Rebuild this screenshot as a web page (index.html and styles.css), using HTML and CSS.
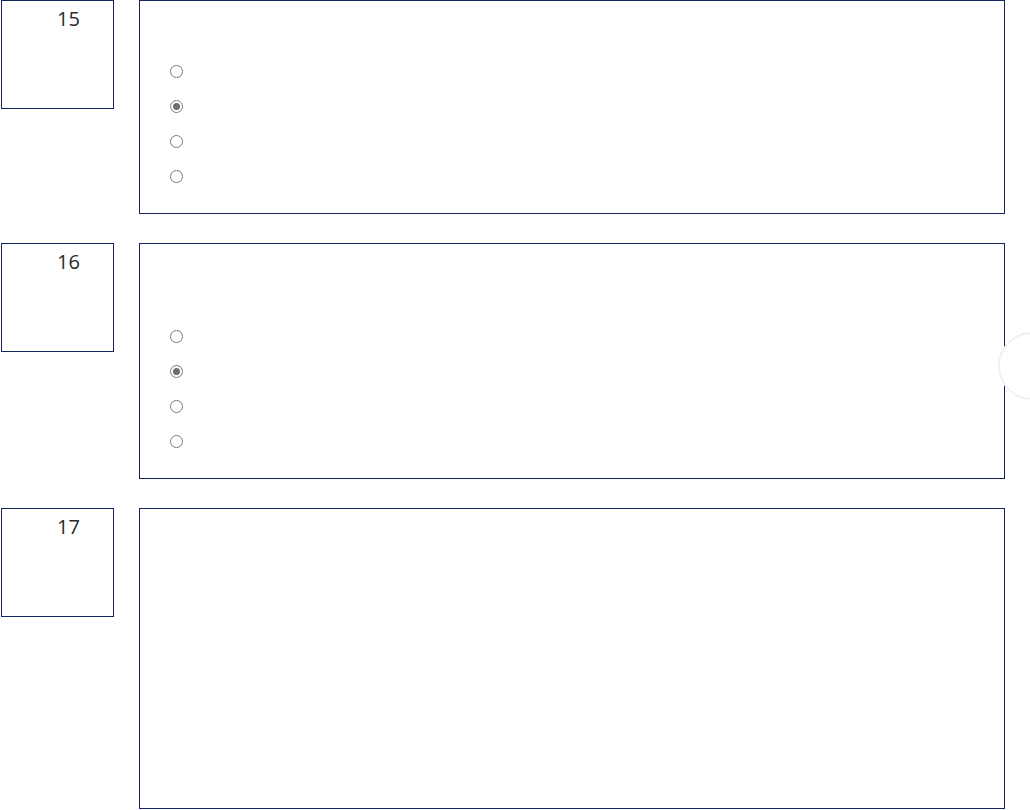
FILE: index.html
```html
<!DOCTYPE html>
<html lang="en">

<head>
  <meta charset="UTF-8" />
  <meta name="viewport" content="width=device-width, initial-scale=1.0" />
  <title>Quiz</title>
  <link rel="stylesheet" href="styles.css">
</head>

<body>
  <div class="quiz">
    <div class="item">
      <div class="num">15</div>
      <div class="card">
        <p class="question one-line"></p>
        <ul class="options">
          <li><span class="radio"></span></li>
          <li><span class="radio checked"></span></li>
          <li><span class="radio"></span></li>
          <li><span class="radio"></span></li>
        </ul>
      </div>
    </div>

    <div class="item">
      <div class="num">16</div>
      <div class="card">
        <p class="question two-line"></p>
        <ul class="options">
          <li><span class="radio"></span></li>
          <li><span class="radio checked"></span></li>
          <li><span class="radio"></span></li>
          <li><span class="radio"></span></li>
        </ul>
      </div>
    </div>

    <div class="item">
      <div class="num">17</div>
      <div class="card card-empty"></div>
    </div>
  </div>

  <!-- nút cuộn bên phải -->
  <div class="scroll-btn"></div>
</body>

</html>
```

FILE: styles.css
```css
* {
  box-sizing: border-box;
  margin: 0;
  padding: 0;
}

html,
body {
  overflow: hidden;
  height: 100%;
}

body {
  font-family: "Open Sans", Arial, sans-serif;
  background: #fff;
  color: #333;
}

.quiz {
  display: flex;
  flex-direction: column;
  gap: 29px;
  padding-left: 1px;
}

.item {
  display: flex;
  align-items: flex-start;
  gap: 25px;
}

.num {
  width: 113px;
  height: 109px;
  flex-shrink: 0;
  border: 1px solid #16235f;
  padding: 4px 0 0 55px;
  font-size: 20px;
  color: #2a2a2a;
}

.card {
  width: 866px;
  border: 1px solid #16235f;
  padding: 20px 30px 19px 30px;
}

.question.one-line {
  height: 33px;
}

.question.two-line {
  height: 55px;
}

.options {
  list-style: none;
}

.options li {
  height: 35px;
  display: flex;
  align-items: center;
}

.radio {
  width: 13px;
  height: 13px;
  border: 1px solid #7a7a7a;
  border-radius: 50%;
  background: #fff;
  display: flex;
  align-items: center;
  justify-content: center;
}

.radio.checked::after {
  content: "";
  width: 7px;
  height: 7px;
  border-radius: 50%;
  background: #6e6e6e;
}

.card-empty {
  height: 301px;
}

.scroll-btn {
  position: fixed;
  left: 998px;
  top: 332px;
  width: 68px;
  height: 68px;
  border: 2px solid #f0f0f0;
  border-radius: 50%;
  background: #fff;
}
```
